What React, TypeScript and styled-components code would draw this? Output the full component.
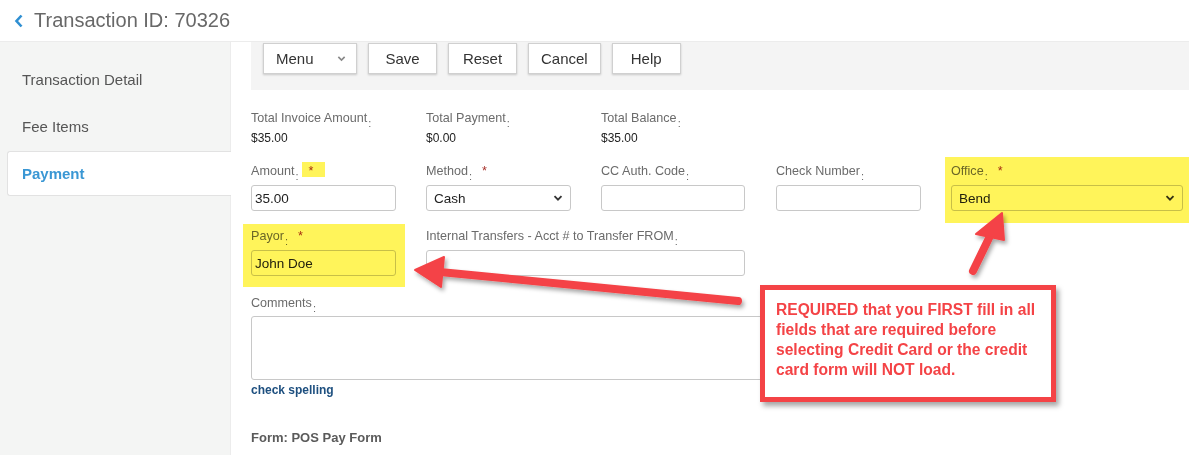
import styled, { createGlobalStyle } from "styled-components";

const GlobalStyle = createGlobalStyle`
  html, body {
    margin: 0;
    padding: 0;
    background: #fff;
    font-family: "Liberation Sans", Arial, sans-serif;
  }
  * { box-sizing: border-box; }
`;

const RED = "#f44346";
const YELLOW = "#fff45a";

const Page = styled.div`
  position: relative;
  width: 1189px;
  height: 455px;
  overflow: hidden;
  display: flex;
  flex-direction: column;
`;

const Header = styled.header`
  height: 42px;
  flex: none;
  display: flex;
  align-items: center;
  gap: 10px;
  padding-left: 14px;
  border-bottom: 1px solid #ececec;
`;

const Title = styled.h1`
  margin: 0;
  font-size: 20px;
  font-weight: 400;
  color: #686868;
`;

const Body = styled.div`
  flex: 1;
  display: flex;
`;

const Sidebar = styled.nav`
  width: 231px;
  flex: none;
  background: #f4f5f4;
  border-right: 1px solid #ececec;
  padding: 15px 0 0 7px;
  display: flex;
  flex-direction: column;
  gap: 2px;
`;

const NavItem = styled.div<{ $active?: boolean }>`
  height: 45px;
  display: flex;
  align-items: center;
  padding-left: 14px;
  font-size: 15px;
  color: ${(p) => (p.$active ? "#3a97d4" : "#555")};
  font-weight: ${(p) => (p.$active ? 700 : 400)};
  background: ${(p) => (p.$active ? "#fff" : "transparent")};
  border: 1px solid ${(p) => (p.$active ? "#e2e2e2" : "transparent")};
  border-right: none;
  border-radius: 3px 0 0 3px;
  margin-right: -1px;
`;

const Main = styled.main`
  flex: 1;
  padding-left: 20px;
`;

const Toolbar = styled.div`
  background: #f4f4f4;
  height: 48px;
  padding: 1px 12px 0;
  display: flex;
  align-items: flex-start;
  gap: 11px;
`;

const Button = styled.div`
  height: 31px;
  min-width: 69px;
  padding: 0 12px;
  display: flex;
  align-items: center;
  justify-content: center;
  background: #fff;
  border: 1px solid #d0d0d0;
  box-shadow: 0 1px 2px rgba(0, 0, 0, 0.18);
  font-size: 15px;
  color: #333;
`;

const MenuButton = styled(Button)`
  width: 94px;
  justify-content: space-between;
  padding: 0 10px 0 12px;
`;

const Form = styled.div`
  padding-top: 21px;
  display: flex;
  flex-direction: column;
`;

const Row = styled.div<{ $top: number }>`
  display: grid;
  grid-template-columns: repeat(5, 175px);
  margin-top: ${(p) => p.$top}px;
`;

const Field = styled.div<{ $span?: number; $top?: number }>`
  grid-column: span ${(p) => p.$span ?? 1};
  margin-top: ${(p) => p.$top ?? 0}px;
  display: flex;
  flex-direction: column;
`;

const Label = styled.div`
  font-size: 12.6px;
  line-height: 14px;
  color: #6b6b6b;
  white-space: nowrap;
`;

const Colon = styled.span`
  position: relative;
  top: 5px;
  font-size: 11px;
  margin-left: 1px;
`;

const Star = styled.span`
  color: #a8322c;
  margin-left: 10px;
`;

const Value = styled.div`
  margin-top: 6px;
  font-size: 12px;
  line-height: 14px;
  color: #222;
`;

const Input = styled.div<{ $width: number }>`
  margin-top: 7px;
  width: ${(p) => p.$width}px;
  height: 26px;
  border: 1px solid #c8c8c8;
  border-radius: 3px;
  background: #fff;
  display: flex;
  align-items: center;
  justify-content: space-between;
  padding: 0 7px 0 3px;
  font-size: 13.5px;
  color: #222;
`;

const Select = styled(Input)`
  padding-left: 7px;
`;

const TextArea = styled.div`
  margin-top: 6px;
  width: 520px;
  height: 64px;
  border: 1px solid #c8c8c8;
  border-radius: 3px;
`;

const SpellLink = styled.div`
  margin-top: 3px;
  font-size: 12px;
  line-height: 14px;
  font-weight: 700;
  color: #1d4f7f;
`;

const FormTitle = styled.div`
  margin-top: 34px;
  font-size: 13px;
  line-height: 14px;
  font-weight: 700;
  color: #5a5a5a;
`;

/* annotation layer */
const Highlight = styled.div<{ $x: number; $y: number; $w: number; $h: number }>`
  position: absolute;
  left: ${(p) => p.$x}px;
  top: ${(p) => p.$y}px;
  width: ${(p) => p.$w}px;
  height: ${(p) => p.$h}px;
  background: ${YELLOW};
  mix-blend-mode: multiply;
  pointer-events: none;
`;

const Callout = styled.div`
  position: absolute;
  left: 760px;
  top: 285px;
  width: 296px;
  height: 117px;
  background: #fff;
  border: 5px solid ${RED};
  box-shadow: 3px 4px 5px rgba(0, 0, 0, 0.35);
  padding: 10px 4px 0 11px;
  font-size: 15.6px;
  line-height: 20px;
  font-weight: 700;
  color: ${RED};
  white-space: nowrap;
`;

const ArrowLayer = styled.svg`
  position: absolute;
  left: 0;
  top: 0;
  pointer-events: none;
`;

const Chevron = ({ color = "#333", size = 10 }: { color?: string; size?: number }) => (
  <svg width={size} height={size} viewBox="0 0 10 10">
    <path d="M1.5 3.2 L5 6.7 L8.5 3.2" fill="none" stroke={color} strokeWidth="1.8" />
  </svg>
);

const labelOf = (text: string, required?: boolean) => (
  <Label>
    {text}
    <Colon>:</Colon>
    {required && <Star>*</Star>}
  </Label>
);

export default function App() {
  return (
    <>
      <GlobalStyle />
      <Page>
        <Header>
          <svg width="10" height="14" viewBox="0 0 10 14">
            <path d="M7.5 1.5 L2.5 7 L7.5 12.5" fill="none" stroke="#2f8fd2" strokeWidth="2.6" />
          </svg>
          <Title>Transaction ID: 70326</Title>
        </Header>
        <Body>
          <Sidebar>
            <NavItem>Transaction Detail</NavItem>
            <NavItem>Fee Items</NavItem>
            <NavItem $active>Payment</NavItem>
          </Sidebar>
          <Main>
            <Toolbar>
              <MenuButton>
                Menu <Chevron color="#888" size={9} />
              </MenuButton>
              <Button>Save</Button>
              <Button>Reset</Button>
              <Button>Cancel</Button>
              <Button>Help</Button>
            </Toolbar>
            <Form>
              <Row $top={0}>
                <Field>
                  {labelOf("Total Invoice Amount")}
                  <Value>$35.00</Value>
                </Field>
                <Field>
                  {labelOf("Total Payment")}
                  <Value>$0.00</Value>
                </Field>
                <Field>
                  {labelOf("Total Balance")}
                  <Value>$35.00</Value>
                </Field>
              </Row>
              <Row $top={19}>
                <Field>
                  {labelOf("Amount", true)}
                  <Input $width={145}>35.00</Input>
                </Field>
                <Field>
                  {labelOf("Method", true)}
                  <Select $width={145}>
                    Cash <Chevron />
                  </Select>
                </Field>
                <Field>
                  {labelOf("CC Auth. Code")}
                  <Input $width={144} />
                </Field>
                <Field>
                  {labelOf("Check Number")}
                  <Input $width={145} />
                </Field>
                <Field>
                  {labelOf("Office", true)}
                  <Select $width={232}>
                    Bend <Chevron />
                  </Select>
                </Field>
              </Row>
              <Row $top={18}>
                <Field>
                  {labelOf("Payor", true)}
                  <Input $width={145}>John Doe</Input>
                </Field>
                <Field $span={2}>
                  {labelOf("Internal Transfers - Acct # to Transfer FROM")}
                  <Input $width={319} />
                </Field>
              </Row>
              <Field $top={20}>
                {labelOf("Comments")}
                <TextArea />
              </Field>
              <SpellLink>check spelling</SpellLink>
              <FormTitle>Form: POS Pay Form</FormTitle>
            </Form>
          </Main>
        </Body>

        <Highlight $x={302} $y={162} $w={23} $h={15} />
        <Highlight $x={945} $y={157} $w={244} $h={66} />
        <Highlight $x={243} $y={224} $w={162} $h={63} />

        <ArrowLayer width="1189" height="455" viewBox="0 0 1189 455">
          <defs>
            <filter id="arrowShadow" x="-10%" y="-30%" width="130%" height="180%">
              <feDropShadow dx="2" dy="3" stdDeviation="2" floodColor="#000" floodOpacity="0.35" />
            </filter>
          </defs>
          <g filter="url(#arrowShadow)" fill={RED} stroke={RED}>
            <line x1="440" y1="272" x2="738" y2="301" strokeWidth="8" strokeLinecap="round" />
            <polygon points="415,270 444,257 441,287" strokeWidth="2" strokeLinejoin="round" />
            <line x1="991" y1="234" x2="973" y2="271" strokeWidth="8" strokeLinecap="round" />
            <polygon points="1002,213 976,234 1004,240" strokeWidth="2" strokeLinejoin="round" />
          </g>
        </ArrowLayer>

        <Callout>
          REQUIRED that you FIRST fill in all
          <br />
          fields that are required before
          <br />
          selecting Credit Card or the credit
          <br />
          card form will NOT load.
        </Callout>
      </Page>
    </>
  );
}
